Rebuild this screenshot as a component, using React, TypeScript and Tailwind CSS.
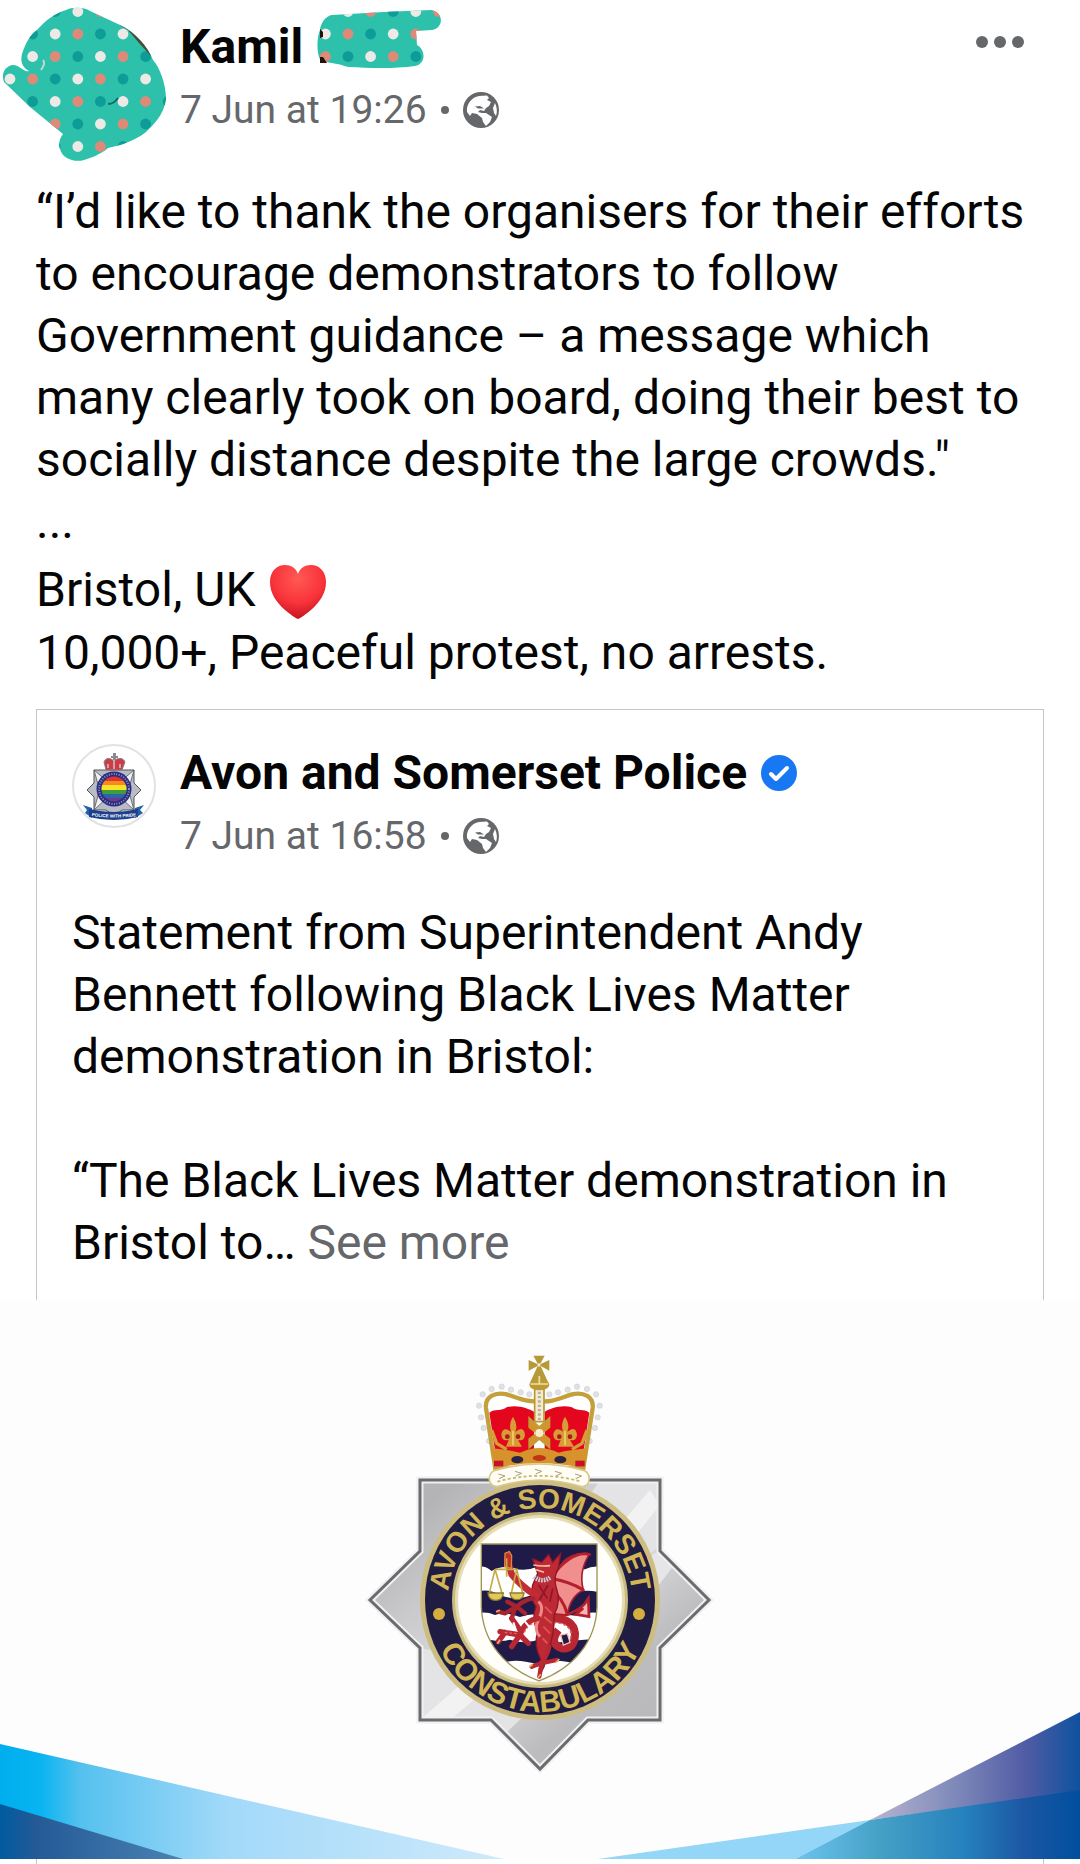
import { ReactNode } from 'react';

const DOT_COLORS = ['#ece9e6', '#dd8a78', '#0f9b98'];
const DOTS = Array.from({ length: 7 * 20 }, (_, i) => ({ row: Math.floor(i / 20), col: i % 20 }));

function Dots() {
  return (
    <>
      {DOTS.map(({ row, col }) => (
        <ellipse key={`${row}-${col}`} cx={10 + col * 22.6} cy={11.5 + row * 22.5} rx={5.4} ry={5.4} fill={DOT_COLORS[(row + col) % 3]} />
      ))}
    </>
  );
}

function CoveredAvatar() {
  return (
    <svg viewBox="0 0 168 169" className="h-[169px] w-[168px] shrink-0" role="img" aria-label="Profile photo">
      <defs>
        <clipPath id="avatarBlob">
          <path d="M66 10C72 7 84 7 90 11L120 25C135 32 148 47 153 60C160 68 166 84 166 99C164 115 153 125 146 132C135 141 118 146 108 148C100 155 90 158 84 160C74 163 62 158 60 149C58 143 60 138 63 134L30 107L4 82C1 75 4 67 12 65C19 64 24 73 29 71C20 66 21 59 22 54C26 42 30 35 37 30C46 20 54 14 66 10Z" />
        </clipPath>
      </defs>
      <g clipPath="url(#avatarBlob)">
        <rect width="168" height="169" fill="#2dc0ab" />
        <Dots />
        <path d="M118 24C134 29 146 42 151 56L139 43L128 30Z" fill="#4a4a32" />
        <path d="M43 60Q46 63 41 70" stroke="#b9dfcb" strokeWidth="2" fill="none" />
        <path d="M108 104Q114 104 118 98" stroke="#126b66" strokeWidth="2" fill="none" />
      </g>
    </svg>
  );
}

function CoveredSurname() {
  return (
    <svg viewBox="316 8 128 62" className="h-[62px] w-[128px] shrink-0" aria-hidden="true">
      <defs>
        <clipPath id="nameBlob">
          <path d="M333 15L385 12C400 11 415 11 432 10C445 12 445 28 433 30L417 31L418 45C427 50 427 64 416 66C395 69 370 68 350 67C346 67 342 64 338 64L322 61C316 52 319 34 321 30C322 22 327 16 333 15Z" />
        </clipPath>
      </defs>
      <g clipPath="url(#nameBlob)">
        <rect x="316" y="8" width="128" height="62" fill="#2dc0ab" />
        <Dots />
      </g>
      <path d="M321 57h3l4 6h-7zM321 29l3 3v5l-3 1z" fill="#26100c" />
    </svg>
  );
}

function Globe() {
  return (
    <svg viewBox="0 0 36 36" className="h-9 w-9" role="img" aria-label="Public">
      <circle cx="18" cy="18" r="18" fill="#65676b" />
      <path d="M4 20C3 12 9 5 16 4L24 3.5L26 6L24 8L28 10L26 14L23 16L21 19L17 18L15 20L19 21L23 21L29 25L27 30L23 34L20 30L19 26L14 22L9 21L7 24Z" fill="#fff" />
      <path d="M32 11C34 15 34.500 20 33 24L31 21L30 16Z" fill="#fff" />
      <path d="M12 14.500L17 14L21 16.500L15 16.500Z" fill="#65676b" />
    </svg>
  );
}

function Verified() {
  return (
    <svg viewBox="0 0 36 36" className="h-9 w-9" role="img" aria-label="Verified">
      <circle cx="18" cy="18" r="18" fill="#1877f2" />
      <path d="M10 19L15 24L26 13" fill="none" stroke="#fff" strokeWidth="4" strokeLinecap="round" strokeLinejoin="round" />
    </svg>
  );
}

function Heart() {
  return (
    <svg viewBox="0 0 56 54" className="mt-3 h-[54px] w-[56px]" role="img" aria-label="Red heart">
      <defs>
        <radialGradient id="heartFill" cx="50%" cy="25%" r="75%">
          <stop offset="0" stopColor="#ff5a54" />
          <stop offset="0.6" stopColor="#f9333a" />
          <stop offset="1" stopColor="#c41420" />
        </radialGradient>
      </defs>
      <path d="M28 54C25 53 20 49 15 45C6 37 0 28 0 17C0 6 7 0 15 0C21 0 26 3 28 9C30 3 35 0 41 0C49 0 56 6 56 17C56 28 50 37 41 45C36 49 31 53 28 54Z" fill="url(#heartFill)" />
    </svg>
  );
}

function PoliceAvatar() {
  return (
    <svg viewBox="0 0 84 84" className="mt-0.5 h-[84px] w-[84px] shrink-0" role="img" aria-label="Avon and Somerset Police">
      <defs>
        <clipPath id="prideDisc"><circle cx="42" cy="45" r="12.5" /></clipPath>
        <path id="prideRibbon" d="M12 71Q42 76 72 71" />
      </defs>
      <circle cx="42" cy="42" r="41" fill="#fff" stroke="#e1e2e5" strokeWidth="2" />
      <path d="M22 26H62V39L69 46L62 53V66H50L42 72L34 66H22V53L15 46L22 39Z" fill="#b9bcc6" stroke="#555" strokeWidth="1" />
      <path d="M22 26L36 38L27 44ZM62 26L48 38L57 44ZM22 66L36 53L27 48ZM62 66L48 53L57 48Z" fill="#eef0f3" stroke="#555" strokeWidth="0.8" />
      <circle cx="42" cy="45" r="17.5" fill="#2c2c7d" />
      <circle cx="42" cy="45" r="15" fill="none" stroke="#8f93c8" strokeWidth="2" strokeDasharray="1 1.5" />
      <g clipPath="url(#prideDisc)">
        <rect x="29" y="32" width="26" height="5" fill="#e8352c" />
        <rect x="29" y="37" width="26" height="4" fill="#f58a1f" />
        <rect x="29" y="41" width="26" height="5" fill="#f8e32b" />
        <rect x="29" y="46" width="26" height="4" fill="#3f9d3a" />
        <rect x="29" y="50" width="26" height="4" fill="#2f62ad" />
        <rect x="29" y="54" width="26" height="5" fill="#6a3a8c" />
        <path d="M51 34Q58 45 51 56L55 58V33Z" fill="#fff" opacity="0.5" />
      </g>
      <path d="M41 9h3v3h2v2h-2v4h-3v-4h-2v-2h2z" fill="#8b8b90" />
      <path d="M34 26L32 18Q34 13 39 15L42 17L45 15Q51 13 53 18L50 26Z" fill="#c93c48" stroke="#8f7c80" strokeWidth="1" />
      <path d="M42 16v9M36 20v4M48 20v4" stroke="#d6bfc3" strokeWidth="1.5" />
      <path d="M11 61L20 64V74L13 69L15 66Z" fill="#1f63a8" />
      <path d="M72 61L63 64V74L71 69L68 66Z" fill="#1f63a8" />
      <path d="M17 65Q42 71 66 65V73Q42 79 17 73Z" fill="#1d3f8c" />
      <text fontFamily="Liberation Sans, sans-serif" fontSize="4.5" fontWeight="bold" fill="#fff" textAnchor="middle">
        <textPath href="#prideRibbon" startOffset="50%">POLICE WITH PRIDE</textPath>
      </text>
    </svg>
  );
}

// drawn on a 3x grid
function Crown() {
  const pearls = [[368, 163], [395, 147], [425, 140], [453, 149], [482, 157], [508, 163], [357, 197], [363, 232], [371, 264], [387, 303]];
  return (
    <g transform="translate(360 40) scale(0.33333)">
      {pearls.map(([x, y]) => (
        <g key={`${x}-${y}`} fill="#e0e1e4" stroke="#cfd0d4" strokeWidth="2">
          <circle cx={x} cy={y} r="8" />
          <circle cx={1076 - x} cy={y} r="8" />
        </g>
      ))}
      <path d="M406 385L378 204C374 170 405 155 440 163C475 174 500 188 538 183C576 188 600 174 636 163C671 155 702 170 698 204L670 385Z" fill="#fff" stroke="#c3a03c" strokeWidth="13" />
      <path d="M388 218C405 205 425 215 440 202C470 192 505 205 522 215L522 350H408ZM688 218C671 205 651 215 636 202C606 192 571 205 554 215L554 350H668Z" fill="#e3061d" />
      <path d="M405 385L394 325Q450 330 480 338Q538 310 596 338Q626 330 682 325L671 385Q538 355 405 385Z" fill="#d6932b" />
      <path d="M524 145H552V245H524Z" fill="#f3ecd0" stroke="#b99733" strokeWidth="5" />
      <path d="M538 155v85" stroke="#b9b39a" strokeWidth="9" strokeDasharray="7 6" />
      <path d="M508 235L538 262L568 235V262L545 280L568 298V322L538 296L508 322V298L531 280L508 262Z" fill="#d6932b" stroke="#c49a35" strokeWidth="6" />
      <circle cx="538" cy="279" r="12" fill="#f6efcf" />
      {[0, 156].map(dx => (
        <g key={dx} transform={`translate(${dx} 0)`}>
          <path d="M459 230Q475 255 466 275Q492 255 495 285Q493 305 474 300L486 320H438L446 300Q424 305 424 282Q430 258 453 275Q445 250 459 230Z" fill="#d99b35" />
          <circle cx="442" cy="290" r="7" fill="#a91c1c" />
          <circle cx="474" cy="290" r="7" fill="#a91c1c" />
          <path d="M459 272v44" stroke="#f0cf71" strokeWidth="5" />
        </g>
      ))}
      <path d="M395 270L410 310L440 328M681 270L666 310L636 328" stroke="#d99b35" strokeWidth="10" fill="none" />
      <ellipse cx="472" cy="359" rx="18" ry="11" fill="#2b2340" />
      <ellipse cx="601" cy="359" rx="18" ry="11" fill="#2b2340" />
      <ellipse cx="538" cy="354" rx="20" ry="9" fill="#c33318" />
      <rect x="402" y="362" width="28" height="17" fill="#c8102e" />
      <rect x="646" y="362" width="28" height="17" fill="#c8102e" />
      {/* cross on top */}
      <path d="M520 47H554L540 73L568 60V92L542 78L564 126H511L533 78L506 92V60L534 73Z" fill="#b79a38" />
      <circle cx="537" cy="75" r="5" fill="#f6edc4" />
      <ellipse cx="538" cy="134" rx="30" ry="17" fill="#bd9a35" />
      <path d="M512 132H564M538 108V132" stroke="#f0e0a0" strokeWidth="5" />
      <path d="M402 392Q538 352 674 392Q692 402 686 425Q682 440 664 440Q538 400 412 440Q390 438 388 418Q388 398 402 392Z" fill="#fffdf4" stroke="#d9c98c" strokeWidth="5" />
      <path d="M412 425Q538 390 664 425" stroke="#c9b566" strokeWidth="5" strokeDasharray="9 7" fill="none" />
      {[[415, 402], [465, 394], [525, 388], [585, 394], [645, 402]].map(([x, y]) => (
        <path key={x} d={`M${x} ${y}l20 6l-18 8`} stroke="#a79f7c" strokeWidth="3" fill="none" />
      ))}
    </g>
  );
}

function Shield() {
  return (
    <g transform="translate(470 235) scale(0.33333)">
      <defs>
        <clipPath id="shieldShape">
          <path d="M34 27H381V215C378 320 310 400 207 438C104 400 38 320 34 215Z" />
        </clipPath>
      </defs>
      <g clipPath="url(#shieldShape)">
        <rect x="30" y="20" width="360" height="420" fill="#fff" />
        <path d="M30 20H390V95Q365 92 345 103Q310 108 280 95Q240 112 200 96Q160 112 130 98Q90 92 65 108Q45 92 30 95Z" fill="#1f1a47" />
        <path d="M30 168Q60 162 90 180Q140 200 190 178Q240 160 290 180Q340 160 390 172V234Q350 228 330 244Q290 236 250 250Q200 228 150 246Q100 228 75 240Q50 230 30 234Z" fill="#1f1a47" />
        <path d="M30 305Q80 325 120 314Q170 330 210 312Q270 330 310 315Q350 318 390 305V378Q340 392 290 380Q240 372 200 388Q150 372 110 380Q60 380 30 378Z" fill="#1f1a47" />
      </g>
      <path d="M34 27H381V215C378 320 310 400 207 438C104 400 38 320 34 215Z" fill="none" stroke="#9d9455" strokeWidth="4" />

      {/* wing */}
      <path d="M358 58Q310 50 280 80L238 145L236 235L292 240Q300 185 340 165Q325 110 358 58Z" fill="#f08f8d" stroke="#a51f2d" strokeWidth="5" />
      <path d="M358 58Q305 45 240 130L230 165M240 130Q300 140 340 165M238 160Q280 190 292 238" fill="none" stroke="#b3202c" strokeWidth="9" strokeLinecap="round" />
      {/* tail */}
      <path d="M250 250Q320 235 345 205L355 190L357 245L318 238L340 220" fill="#f3b5b5" stroke="#b3202c" strokeWidth="8" />
      <path d="M245 250Q310 250 315 295Q315 345 275 340Q235 325 265 285" fill="none" stroke="#b82732" strokeWidth="24" />
      <path d="M250 262Q300 265 304 298Q300 328 280 328" fill="none" stroke="#e0645f" strokeWidth="5" strokeDasharray="8 7" />
      <path d="M272 300L292 296L300 322L280 330Z" fill="#241a3f" stroke="#f2c0bb" strokeWidth="4" />
      {/* body */}
      <path d="M188 72L215 82L236 58L248 82L272 55L265 100Q250 125 258 155Q275 200 252 240Q255 290 235 345L222 395L205 428L212 372Q190 330 203 290Q183 250 198 215Q178 190 188 150L203 115Z" fill="#bd2a35" stroke="#8d1724" strokeWidth="4" />
      <path d="M205 200Q225 215 205 255Q190 285 210 305" stroke="#ef8a84" strokeWidth="9" fill="none" />
      <path d="M225 215L245 235M222 245L245 265M220 275L240 295M218 310L232 325" stroke="#e0544f" strokeWidth="6" />
      <path d="M192 125Q215 145 240 128" stroke="#c9ccd6" strokeWidth="14" strokeDasharray="5 3" fill="none" />
      <path d="M190 90Q215 95 240 92M198 104L222 112" stroke="#f4c4a6" strokeWidth="5" fill="none" />
      <path d="M206 150L232 190M234 150L208 195M248 160L240 200" stroke="#8d1724" strokeWidth="5" />
      {/* arm with scales */}
      <path d="M195 180Q150 150 125 118L112 75" fill="none" stroke="#c22c34" strokeWidth="20" strokeLinecap="round" />
      <path d="M105 55L118 50L125 62L124 100L104 95Z" fill="#c22c34" stroke="#d98b34" strokeWidth="4" />
      <path d="M75 103H143M110 70V125M75 103L58 175M75 103L96 175M140 103L124 175M140 103L158 175" fill="none" stroke="#c4ab46" strokeWidth="5" />
      <path d="M54 174H100Q98 196 77 196Q56 196 54 174ZM120 174H162Q160 194 141 194Q122 194 120 174Z" fill="#e0ca5c" stroke="#8f7b2a" strokeWidth="4" />
      {/* claws and legs */}
      <path d="M190 190Q160 195 140 215L105 235M140 215L112 200M135 220L125 250M140 215L165 235M105 235L85 230" fill="none" stroke="#a8232f" strokeWidth="13" strokeLinecap="round" />
      <path d="M205 250Q165 255 150 300L90 290M150 285L125 250M150 300L125 335M105 292L85 320M150 300L175 325" fill="none" stroke="#b82732" strokeWidth="16" strokeLinecap="round" />
      <path d="M200 262Q172 266 160 300M140 296L100 292" fill="none" stroke="#e0645f" strokeWidth="4" strokeDasharray="8 6" />
      <path d="M165 260L185 285L175 308M130 262L138 285" stroke="#fff" strokeWidth="6" fill="none" />
      <path d="M238 335Q232 365 212 385L185 395M212 385L260 375M215 385L208 425" fill="none" stroke="#b82732" strokeWidth="13" strokeLinecap="round" />
      <path d="M178 396L188 388M258 382L268 372M204 428L212 418M82 326L90 314M78 230L90 226" stroke="#e8b070" strokeWidth="5" />
    </g>
  );
}

function CoverImage() {
  return (
    <svg viewBox="0 0 1080 559" className="block h-auto w-full" role="img" aria-label="Avon and Somerset Constabulary crest">
      <defs>
        <linearGradient id="skyLeft" gradientUnits="userSpaceOnUse" x1="0" y1="0" x2="504" y2="0">
          <stop offset="0" stopColor="#00aeef" />
          <stop offset="0.08" stopColor="#08b4f1" />
          <stop offset="0.16" stopColor="#55c1ee" />
          <stop offset="0.45" stopColor="#a2d9f9" />
          <stop offset="1" stopColor="#cfeafb" />
        </linearGradient>
        <linearGradient id="navyLeft" gradientUnits="userSpaceOnUse" x1="0" y1="0" x2="183" y2="0">
          <stop offset="0" stopColor="#005b9f" />
          <stop offset="0.2" stopColor="#245a96" />
          <stop offset="1" stopColor="#4a83b4" />
        </linearGradient>
        <linearGradient id="purpleRight" gradientUnits="userSpaceOnUse" x1="870" y1="0" x2="1080" y2="0">
          <stop offset="0" stopColor="#b9b4cf" />
          <stop offset="0.35" stopColor="#8690bd" />
          <stop offset="0.75" stopColor="#4f5ba4" />
          <stop offset="1" stopColor="#0d529f" />
        </linearGradient>
        <linearGradient id="blueRight" gradientUnits="userSpaceOnUse" x1="795" y1="0" x2="1080" y2="0">
          <stop offset="0" stopColor="#6cc4ec" />
          <stop offset="0.3" stopColor="#45a0c6" />
          <stop offset="0.6" stopColor="#2580bd" />
          <stop offset="0.8" stopColor="#1c57a3" />
          <stop offset="1" stopColor="#004f9e" />
        </linearGradient>
        <linearGradient id="silver" x1="0" y1="0" x2="1" y2="1">
          <stop offset="0.15" stopColor="#b4b4b6" />
          <stop offset="0.3" stopColor="#cacacc" />
          <stop offset="0.5" stopColor="#dedee0" />
          <stop offset="0.7" stopColor="#bcbcbe" />
          <stop offset="1" stopColor="#b4b4b6" />
        </linearGradient>
        <clipPath id="starShape">
          <path d="M420 180H660V251L709 300L660 348V420H588L540 469L491 420H420V348L370 300L420 251Z" />
        </clipPath>
        <path id="arcTop" d="M448 320V300A92 92 0 0 1 632 300V320" />
        <path id="arcBottom" d="M428 300A112 112 0 0 0 652 300" />
      </defs>
      <rect width="1080" height="559" fill="#fdfdfd" />
      <path d="M0 444L504 559H0Z" fill="url(#skyLeft)" />
      <path d="M0 504L183 559H0Z" fill="url(#navyLeft)" />
      <path d="M598 559L870 520L795 559Z" fill="#93d6f8" />
      <path d="M870 520L1080 412V492Z" fill="url(#purpleRight)" />
      <path d="M795 559L870 520L1080 490V559Z" fill="url(#blueRight)" />

      <g clipPath="url(#starShape)">
        <rect x="360" y="170" width="360" height="310" fill="url(#silver)" />
        <path d="M600 180H660V245L610 290L560 240ZM420 348L480 360L530 410L505 434L491 420H420Z" fill="#e4e4e6" />
        <path d="M420 420L500 350L515 365L450 420ZM590 260L650 190L660 205L600 280Z" fill="#f2f2f3" />
        <path d="M660 251L674 265L640 310L620 270Z" fill="#e6e6e8" />
      </g>
      <path d="M420 180H660V251L709 300L660 348V420H588L540 469L491 420H420V348L370 300L420 251Z" fill="none" stroke="#f0f0f0" strokeWidth="7" />
      <path d="M420 180H660V251L709 300L660 348V420H588L540 469L491 420H420V348L370 300L420 251Z" fill="none" stroke="#6b6b6f" strokeWidth="3" />

      <circle cx="540" cy="300" r="120" fill="#cdbd80" />
      <circle cx="540" cy="300" r="115" fill="#201c42" />
      <circle cx="540" cy="300" r="88" fill="#c9bb7e" />
      <circle cx="540" cy="300" r="85" fill="#e4dcb4" />
      <circle cx="540" cy="300" r="82" fill="#fffef8" />
      <circle cx="439" cy="314" r="6" fill="#d6ae3f" />
      <circle cx="639" cy="314" r="6" fill="#d6ae3f" />
      <g fontFamily="Liberation Sans, Arial, sans-serif" fontWeight="bold" fill="#d2b656" textAnchor="middle">
        <text fontSize="28"><textPath href="#arcTop" startOffset="50%">AVON &amp; SOMERSET</textPath></text>
        <text fontSize="30"><textPath href="#arcBottom" startOffset="50%">CONSTABULARY</textPath></text>
      </g>
      <Shield />
      <Crown />
    </svg>
  );
}

function PostTime({ children }: { children: ReactNode }) {
  return (
    <div className="flex items-center gap-[14px] text-[39px] leading-[64px] text-[#65676b]">
      <a href="#post">{children}</a>
      <span className="h-2 w-2 rounded-full bg-[#65676b]" />
      <Globe />
    </div>
  );
}

export default function App() {
  return (
    <main className="w-full bg-white font-[Roboto,sans-serif] text-[48px] leading-[62px] text-[#050505]">
      <header className="flex items-start">
        <CoveredAvatar />
        <div className="ml-3 flex-1 pt-2">
          <div className="flex h-[70px] items-start gap-3">
            <h1 className="mt-2 font-bold">Kamil</h1>
            <CoveredSurname />
          </div>
          <PostTime>7 Jun at 19:26</PostTime>
        </div>
        <button type="button" aria-label="More options" className="mt-9 mr-14 flex gap-[6px]">
          <span className="h-3 w-3 rounded-full bg-[#65676b]" />
          <span className="h-3 w-3 rounded-full bg-[#65676b]" />
          <span className="h-3 w-3 rounded-full bg-[#65676b]" />
        </button>
      </header>

      <section className="mt-3 px-9">
        <p>
          “I’d like to thank the organisers for their efforts to encourage demonstrators to follow Government guidance – a message which many clearly took on board, doing their best to socially distance despite the large crowds."
        </p>
        <p>...</p>
        <p className="flex h-[69px] items-start gap-[14px]">
          <span className="mt-[6px]">Bristol, UK</span>
          <Heart />
        </p>
        <p>10,000+, Peaceful protest, no arrests.</p>
      </section>

      <article className="mt-[25px]">
        <div className="mx-9 border-x border-t border-[#c4c6c9] px-[35px] pt-8 pb-[26px]">
          <div className="flex items-start gap-6">
            <PoliceAvatar />
            <div>
              <div className="flex items-center gap-[14px]">
                <h2 className="font-bold">Avon and Somerset Police</h2>
                <Verified />
              </div>
              <PostTime>7 Jun at 16:58</PostTime>
            </div>
          </div>
          <p className="mt-[34px]">Statement from Superintendent Andy Bennett following Black Lives Matter demonstration in Bristol:</p>
          <p className="mt-[62px]">
            “The Black Lives Matter demonstration in Bristol to… <a href="#more" className="text-[#65676b]">See more</a>
          </p>
        </div>
        <CoverImage />
        <div className="mx-9 h-[5px] border-x border-[#c4c6c9]" />
      </article>
    </main>
  );
}
